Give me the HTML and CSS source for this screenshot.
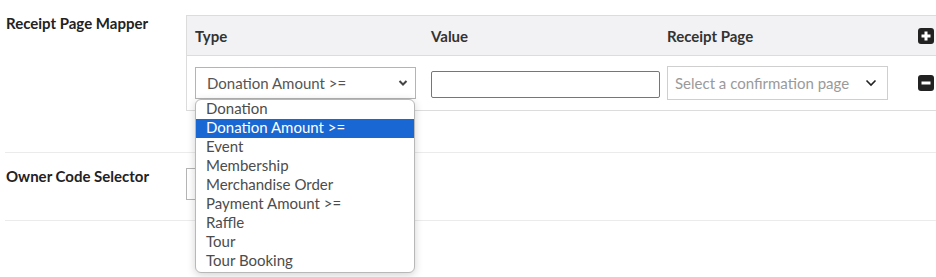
FILE: index.html
```html
<!DOCTYPE html>
<html lang="en">

<head>
    <meta charset="UTF-8">
    <meta name="viewport" content="width=device-width, initial-scale=1.0">
    <title>Receipt settings</title>
    <link rel="stylesheet" href="styles.css">
</head>

<body>
    <div class="form">
        <div class="field">
            <div class="label">Receipt Page Mapper</div>
            <div class="mapper">
                <div class="head">
                    <div class="cell">Type</div>
                    <div class="cell">Value</div>
                    <div class="cell">Receipt Page</div>
                    <div class="cell tool">
                        <span class="icon">
                            <svg width="16" height="16" viewBox="0 0 16 16"><rect x="0" y="0" width="16" height="16" rx="3" fill="#222"/><path d="M8 3.5v9M3.5 8h9" stroke="#fff" stroke-width="3"/></svg>
                        </span>
                    </div>
                </div>
                <div class="row">
                    <div class="cell type">
                        <div class="select">
                            <span>Donation Amount &gt;=</span>
                            <svg width="10" height="8" viewBox="0 0 10 8"><path d="M1.5 2l3.5 3.5 3.5-3.5" fill="none" stroke="#444" stroke-width="2"/></svg>
                        </div>
                        <!-- open list of the type select -->
                        <ul class="options">
                            <li>Donation</li>
                            <li class="on">Donation Amount &gt;=</li>
                            <li>Event</li>
                            <li>Membership</li>
                            <li>Merchandise Order</li>
                            <li>Payment Amount &gt;=</li>
                            <li>Raffle</li>
                            <li>Tour</li>
                            <li>Tour Booking</li>
                        </ul>
                    </div>
                    <div class="cell">
                        <input class="value" type="text">
                    </div>
                    <div class="cell">
                        <div class="select page">
                            <span>Select a confirmation page</span>
                            <svg width="12" height="8" viewBox="0 0 12 8"><path d="M1.5 1.5l4.5 4.5 4.5-4.5" fill="none" stroke="#222" stroke-width="1.6"/></svg>
                        </div>
                    </div>
                    <div class="cell tool">
                        <span class="icon">
                            <svg width="16" height="16" viewBox="0 0 16 16"><rect x="0" y="0" width="16" height="16" rx="3" fill="#222"/><path d="M3.5 8h9" stroke="#fff" stroke-width="3"/></svg>
                        </span>
                    </div>
                </div>
            </div>
        </div>
        <div class="field second">
            <div class="label">Owner Code Selector</div>
            <div class="owner"></div>
        </div>
    </div>
</body>

</html>
```

FILE: styles.css
```css
* {
    margin: 0;
    padding: 0;
    box-sizing: border-box;
}

html,
body {
    min-height: 100vh;
}

body {
    font-family: Lato, "Open Sans", sans-serif;
    background-color: #fff;
    color: #222;
}

.form {
    margin-left: 5px;
}

.field {
    display: flex;
    padding: 15px 0 41px;
    border-bottom: 1px solid #ebebeb;
}

.field.second {
    padding: 15px 0 20px;
}

.label {
    width: 181px;
    padding-left: 1px;
    margin-top: -1px;
    font-size: 15px;
    font-weight: bold;
    line-height: 18px;
}

.mapper {
    flex: 1;
    border-top: 1px solid #dcdcdc;
    border-left: 1px solid #dcdcdc;
    border-bottom: 1px solid #dcdcdc;
}

.head,
.row {
    display: grid;
    grid-template-columns: 236px 236px 236px 1fr;
    align-items: center;
}

.head {
    height: 40px;
    background-color: #f2f2f4;
    border-bottom: 1px solid #dcdcdc;
    font-size: 15px;
    font-weight: bold;
    color: #333;
}

.row {
    height: 54px;
}

.cell {
    padding-left: 8px;
}

.tool {
    padding-left: 23px;
}

.icon {
    display: block;
    width: 16px;
    height: 16px;
}

.icon svg {
    display: block;
}

.head .tool .icon {
    margin-top: 1px;
}

.row .tool .icon {
    margin-top: -1px;
}

.type {
    position: relative;
}

.select {
    display: flex;
    align-items: center;
    justify-content: space-between;
    width: 221px;
    height: 32px;
    padding: 0 7px 1px 11px;
    border: 1px solid #b4b4b4;
    font-size: 15px;
    color: #555;
}

.select.page {
    height: 34px;
    padding: 0 10px 1px 7px;
    border-color: #cfcfcf;
    color: #9a9a9a;
}

.value {
    display: block;
    width: 229px;
    height: 27px;
    margin-top: 2px;
    border: 1px solid #767676;
    border-radius: 2px;
}

.options {
    position: absolute;
    top: 32px;
    left: 8px;
    width: 220px;
    padding: 0 0 1px;
    list-style: none;
    background-color: #fff;
    border: 1px solid #b8b8b8;
    border-radius: 6px;
    box-shadow: 0 2px 8px rgba(0, 0, 0, 0.18);
    font-size: 15px;
    color: #4c4c4c;
    z-index: 2;
}

.options li {
    height: 19px;
    line-height: 17px;
    padding-left: 10px;
}

.options li.on {
    background-color: #1967d2;
    color: #fff;
}

.owner {
    width: 120px;
    height: 32px;
    border: 1px solid #b4b4b4;
}
```
